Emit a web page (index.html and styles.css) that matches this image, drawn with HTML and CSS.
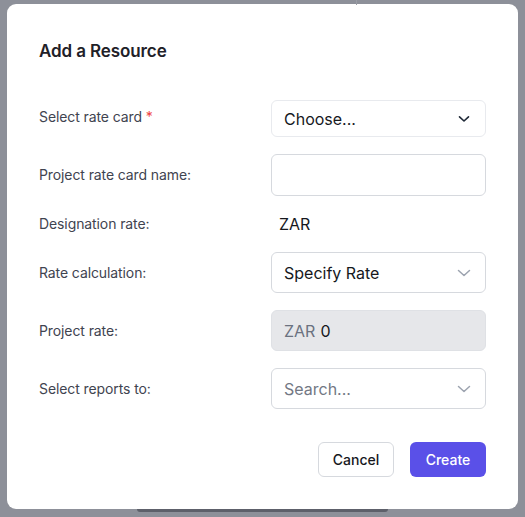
FILE: index.html
```html
<!DOCTYPE html>
<html>
<head>
<meta charset="utf-8">
<link rel="stylesheet" href="styles.css">
</head>
<body>
<div class="backdrop">
  <div class="bg-line"></div>
  <div class="modal">
    <h2 class="title">Add a Resource</h2>
    <div class="form">
      <div class="row row-select">
        <label class="label">Select rate card <span class="req">*</span></label>
        <div class="control select select-sm">
          <span class="value">Choose...</span>
          <svg class="chev" width="12" height="8" viewBox="0 0 12 8"><path d="M1.5 1.8 L6 6 L10.5 1.8" fill="none" stroke="#1f2937" stroke-width="1.6" stroke-linecap="round" stroke-linejoin="round"/></svg>
        </div>
      </div>
      <div class="row">
        <label class="label">Project rate card name:</label>
        <div class="control input tall"></div>
      </div>
      <div class="row row-text">
        <label class="label">Designation rate:</label>
        <div class="plain">ZAR</div>
      </div>
      <div class="row">
        <label class="label">Rate calculation:</label>
        <div class="control select">
          <span class="value">Specify Rate</span>
          <svg class="chev" width="14" height="8" viewBox="0 0 14 8"><path d="M1.5 1.5 L7 6.5 L12.5 1.5" fill="none" stroke="#9ca3af" stroke-width="1.5" stroke-linecap="round" stroke-linejoin="round"/></svg>
        </div>
      </div>
      <div class="row">
        <label class="label">Project rate:</label>
        <div class="control input disabled">
          <span class="prefix">ZAR</span><span class="value">0</span>
        </div>
      </div>
      <div class="row">
        <label class="label">Select reports to:</label>
        <div class="control select">
          <span class="placeholder">Search...</span>
          <svg class="chev" width="14" height="8" viewBox="0 0 14 8"><path d="M1.5 1.5 L7 6.5 L12.5 1.5" fill="none" stroke="#9ca3af" stroke-width="1.5" stroke-linecap="round" stroke-linejoin="round"/></svg>
        </div>
      </div>
    </div>
    <div class="actions">
      <button class="btn btn-cancel">Cancel</button>
      <button class="btn btn-create">Create</button>
    </div>
  </div>
  <div class="bg-bar"></div>
</div>
</body>
</html>
```
FILE: styles.css
```css
* { box-sizing: border-box; }
html, body { margin: 0; padding: 0; }
body {
  background: #8d9099;
  font-family: Inter, "Noto Sans", "Liberation Sans", sans-serif;
  width: 525px;
  height: 517px;
  overflow: hidden;
}
.backdrop {
  position: relative;
  padding: 4px 7px 0 7px;
}
.bg-line {
  position: absolute;
  left: 356px;
  top: 0;
  width: 1px;
  height: 5px;
  background: #999ca4;
}
.modal {
  background: #fff;
  border-radius: 9px;
  width: 511px;
  height: 505px;
  padding: 32px 32px 32px 32px;
  display: flex;
  flex-direction: column;
}
.title {
  margin: 3px 0 0 0;
  font-size: 17px;
  font-weight: 600;
  line-height: 24px;
  color: #1f2128;
  letter-spacing: -0.1px;
}
.form {
  margin-top: 37px;
  display: flex;
  flex-direction: column;
  gap: 17px;
}
.row {
  display: grid;
  grid-template-columns: 232px 215px;
  align-items: center;
}
.row-select { align-items: start; }
.row-select .label { margin-top: 7px; }
.row-text { padding: 1px 0; }
.label {
  font-size: 14px;
  color: #3f4450;
  line-height: 20px;
  letter-spacing: -0.1px;
}
.req { color: #ef4444; }
.control {
  height: 41px;
  border: 1px solid #d6d9de;
  border-radius: 6px;
  display: flex;
  align-items: center;
  padding: 0 12px;
  font-size: 16px;
  color: #16181d;
}
.tall { height: 42px; }
.select-sm {
  height: 37px;
  border-color: #e8eaee;
}
.select { justify-content: space-between; }
.select .chev { margin-right: 2px; }
.select-sm .chev { margin-right: 3px; }
.plain {
  font-size: 16px;
  color: #16181d;
  padding-left: 8px;
  line-height: 20px;
}
.disabled {
  background: #e6e7ea;
  border-color: #dfe1e5;
  padding-left: 12px;
}
.prefix { color: #6b7280; margin-right: 5px; }
.placeholder { color: #737884; }
.actions {
  margin-top: 33px;
  display: flex;
  justify-content: flex-end;
  gap: 16px;
}
.btn {
  height: 35px;
  border-radius: 6px;
  font-family: inherit;
  font-size: 14px;
  font-weight: 500;
  padding: 0;
  width: 76px;
}
.btn-cancel {
  background: #fff;
  border: 1px solid #d6d9de;
  color: #16181d;
}
.btn-create {
  background: #5a50e8;
  border: none;
  color: #fff;
}
.bg-bar {
  margin-left: 130px;
  width: 251px;
  height: 3px;
  background: #5d606a;
  border-radius: 0 0 4px 4px;
}
```
